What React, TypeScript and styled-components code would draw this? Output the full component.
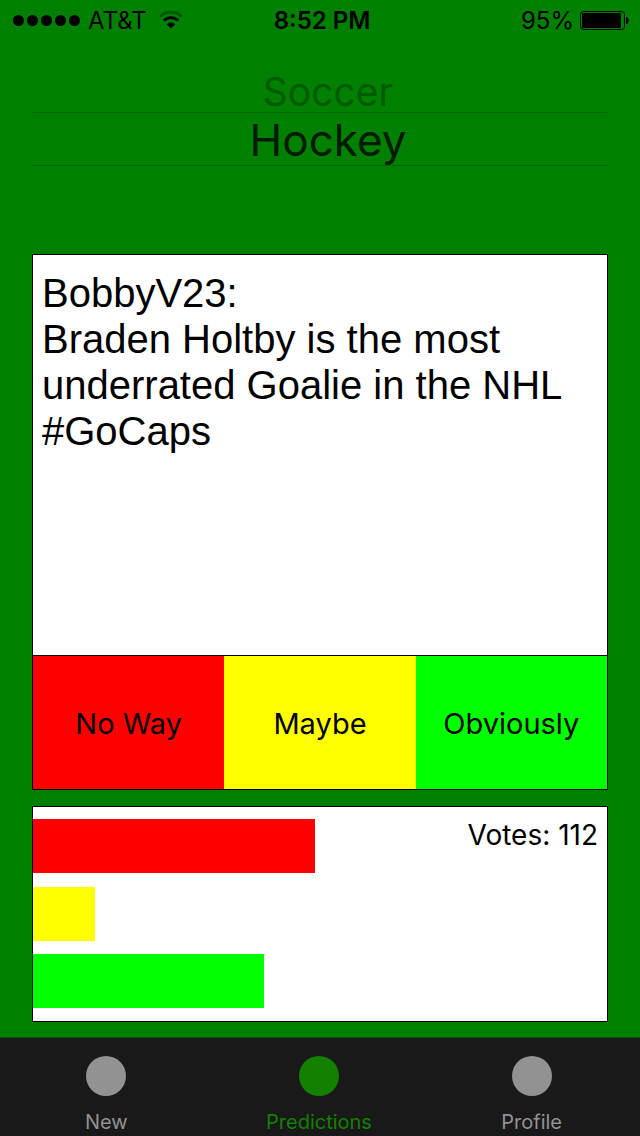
import React, { useState } from "react";
import styled, { createGlobalStyle } from "styled-components";

const GlobalStyle = createGlobalStyle`
  *, *::before, *::after { box-sizing: border-box; }
  body {
    margin: 0;
    background: #008000;
    color: #000;
    font-family: Inter, sans-serif;
  }
`;

const Screen = styled.div`
  display: flex;
  flex-direction: column;
  min-height: 100vh;
`;

const StatusBar = styled.header`
  display: grid;
  grid-template-columns: 1fr auto 1fr;
  align-items: center;
  height: 40px;
  padding: 0 11px 0 13px;
  font-size: 24px;
  line-height: 28px;
`;

const StatusGroup = styled.div<{ $end?: boolean }>`
  display: flex;
  align-items: center;
  justify-content: ${({ $end }) => ($end ? "flex-end" : "flex-start")};
  gap: ${({ $end }) => ($end ? "6px" : "8px")};
`;

const Signal = styled.div`
  display: flex;
  gap: 3px;
`;

const SignalDot = styled.span`
  width: 11px;
  height: 11px;
  border-radius: 50%;
  background: #000;
`;

const StatusText = styled.span`
  padding-top: 2px;
`;

const Carrier = styled(StatusText)`
  margin-right: 4px;
`;

const Clock = styled.time`
  padding: 2px 0 0 2px;
  font-weight: 600;
`;

const Picker = styled.div`
  display: grid;
  grid-template-rows: 72px 54px 88px;
  margin: 0 32px;
`;

const PickerSlot = styled.div<{ $selected?: boolean }>`
  display: flex;
  align-items: flex-end;
  justify-content: center;
  padding-left: 16px;
  border: solid #006600;
  border-width: ${({ $selected }) => ($selected ? "1px 0" : "0")};
`;

const PickerOption = styled.button<{ $selected?: boolean }>`
  padding: 0;
  border: 0;
  background: none;
  font: inherit;
  font-size: ${({ $selected }) => ($selected ? "44px" : "39px")};
  line-height: ${({ $selected }) => ($selected ? "50px" : "40px")};
  color: ${({ $selected }) => ($selected ? "#001a00" : "#005a00")};
`;

const Main = styled.main`
  display: flex;
  flex: 1;
  flex-direction: column;
  gap: 16px;
  padding: 0 32px 15px;
`;

const Card = styled.section`
  display: flex;
  flex: 1;
  flex-direction: column;
  border: 1px solid #000;
  background: #fff;
`;

const Prediction = styled.p`
  flex: 1;
  margin: 0;
  padding: 15px 9px;
  font-family: "Liberation Sans", Arial, sans-serif;
  font-size: 40px;
  line-height: 46px;
`;

const VoteRow = styled.div`
  display: grid;
  grid-template-columns: repeat(3, 1fr);
  border-top: 1px solid #000;
`;

const VoteButton = styled.button<{ $color: string }>`
  height: 133px;
  padding: 2px 0 0;
  border: 0;
  background: ${({ $color }) => $color};
  color: #000;
  font: inherit;
  font-size: 29px;
`;

const Results = styled.section`
  display: grid;
  border: 1px solid #000;
  background: #fff;
`;

const Bars = styled.div`
  display: flex;
  grid-area: 1 / 1;
  flex-direction: column;
  justify-content: space-between;
  height: 214px;
  padding: 12px 0 13px;
`;

const Bar = styled.div<{ $color: string }>`
  height: 54px;
  background: ${({ $color }) => $color};
`;

const VoteCount = styled.p`
  grid-area: 1 / 1;
  justify-self: end;
  margin: 0;
  padding: 11px 9px;
  font-size: 28px;
  line-height: 34px;
`;

const TabBar = styled.nav`
  display: grid;
  grid-template-columns: repeat(3, 1fr);
  height: 99px;
  padding: 18px 2px 0 0;
  border-top: 1px solid #0d4d0d;
  background: #191919;
`;

const Tab = styled.a<{ $active?: boolean }>`
  display: flex;
  flex-direction: column;
  align-items: center;
  gap: 14px;
  color: ${({ $active }) => ($active ? "#148000" : "#929292")};
  font-size: 20px;
  line-height: 24px;
  text-decoration: none;
`;

const TabDot = styled.span`
  width: 40px;
  height: 40px;
  border-radius: 50%;
  background: currentColor;
`;

const WifiIcon = () => (
  <svg width="24" height="18" viewBox="0 0 24 18" fill="none" aria-label="Wi-Fi">
    <path d="M1 5.6C7 -0.4 17 -0.4 23 5.6" stroke="#005400" strokeWidth="2.6" />
    <path d="M4.8 9.6C9 5.6 15 5.6 19.2 9.6" stroke="#000" strokeWidth="2.8" />
    <path d="M7.8 13.2C10.2 11 13.8 11 16.2 13.2L12 17.4Z" fill="#000" />
  </svg>
);

const BatteryIcon = () => (
  <svg width="49" height="19" viewBox="0 0 49 19" fill="none" aria-label="Battery">
    <rect x="0.5" y="0.5" width="44" height="18" rx="3" stroke="#000" />
    <rect x="2" y="2" width="39" height="15" rx="1" fill="#000" />
    <path d="M46 6C49.6 6.6 49.6 12.4 46 13Z" fill="#000" />
  </svg>
);

const choices = [
  { label: "No Way", color: "#ff0000", votes: 55 },
  { label: "Maybe", color: "#ffff00", votes: 12 },
  { label: "Obviously", color: "#00ff00", votes: 45 },
];

const tabs = ["New", "Predictions", "Profile"];

export default function App() {
  const [votes, setVotes] = useState(choices.map((choice) => choice.votes));
  const total = votes.reduce((sum, count) => sum + count, 0);

  const vote = (index: number) =>
    setVotes((current) => current.map((count, i) => (i === index ? count + 1 : count)));

  return (
    <Screen>
      <GlobalStyle />
      <StatusBar>
        <StatusGroup>
          <Signal>
            {[0, 1, 2, 3, 4].map((dot) => (
              <SignalDot key={dot} />
            ))}
          </Signal>
          <Carrier>AT&amp;T</Carrier>
          <WifiIcon />
        </StatusGroup>
        <Clock>8:52 PM</Clock>
        <StatusGroup $end>
          <StatusText>95%</StatusText>
          <BatteryIcon />
        </StatusGroup>
      </StatusBar>

      <Picker>
        <PickerSlot>
          <PickerOption type="button">Soccer</PickerOption>
        </PickerSlot>
        <PickerSlot $selected>
          <PickerOption type="button" $selected aria-pressed="true">
            Hockey
          </PickerOption>
        </PickerSlot>
      </Picker>

      <Main>
        <Card>
          <Prediction>
            BobbyV23:
            <br />
            Braden Holtby is the most underrated Goalie in the NHL #GoCaps
          </Prediction>
          <VoteRow>
            {choices.map((choice, index) => (
              <VoteButton
                key={choice.label}
                type="button"
                $color={choice.color}
                onClick={() => vote(index)}
              >
                {choice.label}
              </VoteButton>
            ))}
          </VoteRow>
        </Card>

        <Results>
          <Bars>
            {choices.map((choice, index) => (
              <Bar
                key={choice.label}
                $color={choice.color}
                style={{ width: `${(votes[index] / total) * 100}%` }}
              />
            ))}
          </Bars>
          <VoteCount>Votes: {total}</VoteCount>
        </Results>
      </Main>

      <TabBar>
        {tabs.map((tab) => (
          <Tab key={tab} href={`#${tab.toLowerCase()}`} $active={tab === "Predictions"}>
            <TabDot />
            {tab}
          </Tab>
        ))}
      </TabBar>
    </Screen>
  );
}
